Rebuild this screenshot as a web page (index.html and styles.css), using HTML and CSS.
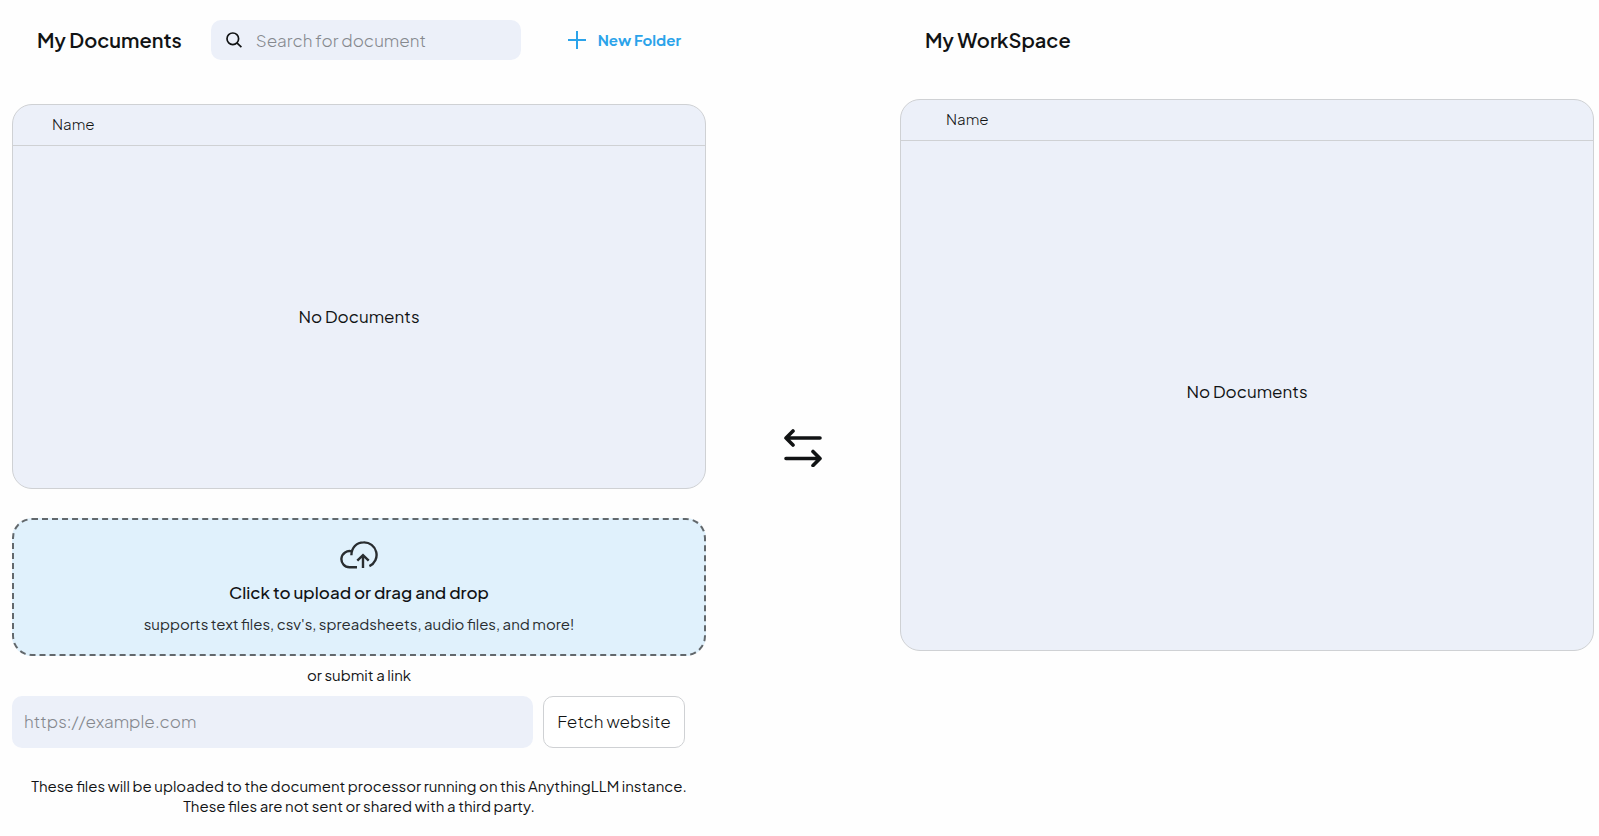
FILE: index.html
```html
<!DOCTYPE html>
<html lang="en">
<head>
<meta charset="utf-8">
<meta name="viewport" content="width=device-width, initial-scale=1">
<title>Documents</title>
<link rel="stylesheet" href="styles.css">
</head>
<body>
<main class="manager">
  <section class="column">
    <header class="column-header">
      <h2 class="title">My Documents</h2>
      <label class="search">
        <svg class="search-icon" viewBox="0 0 16 16" aria-hidden="true"><circle cx="6.8" cy="6.8" r="5.8"/><path d="M10.9 10.900 15.400 15.200"/></svg>
        <input class="search-input" type="search" placeholder="Search for document" aria-label="Search for document">
      </label>
      <button class="new-folder" type="button">
        <svg class="plus-icon" viewBox="0 0 18 18" aria-hidden="true"><path d="M9 0v18M0 9h18"/></svg>
        <span class="new-folder-label">New Folder</span>
      </button>
    </header>
    <table class="files">
      <thead><tr><th scope="col">Name</th></tr></thead>
      <tbody><tr><td>No Documents</td></tr></tbody>
    </table>
    <button class="dropzone" type="button">
      <svg class="cloud-icon" viewBox="0 0 38 28" aria-hidden="true"><path d="M17 26.300H9.500A8.100 8.100 0 1 1 11.700 10.400M11.400 14.300C11.400 6.800 16.500 1.400 23.600 1.400A12.500 12.500 0 0 1 29.400 25.200M23 27V14.300M17.300 19.600 23 14.100 28.700 19.600"/></svg>
      <span class="dropzone-title">Click to upload or drag and drop</span>
      <span class="dropzone-hint">supports text files, csv's, spreadsheets, audio files, and more!</span>
    </button>
    <p class="link-caption">or submit a link</p>
    <form class="link-form">
      <input class="link-input" type="url" placeholder="https://example.com" aria-label="Website link">
      <button class="fetch" type="button">Fetch website</button>
    </form>
    <p class="note">These files will be uploaded to the document processor running on this AnythingLLM instance.<br>These files are not sent or shared with a third party.</p>
  </section>
  <div class="transfer">
    <svg class="transfer-icon" viewBox="0 0 38 38" aria-hidden="true"><path d="M36 9H2M9 2 2 9l7 7M2 29.500h34M29 22.500l7 7-7 7"/></svg>
  </div>
  <section class="column">
    <header class="column-header">
      <h2 class="title">My WorkSpace</h2>
    </header>
    <table class="files files-workspace">
      <thead><tr><th scope="col">Name</th></tr></thead>
      <tbody><tr><td>No Documents</td></tr></tbody>
    </table>
  </section>
</main>
</body>
</html>
```
FILE: styles.css
```css
* {
  box-sizing: border-box;
}

body {
  margin: 0;
  background: #fefefe;
  color: #111314;
  font-family: "Plus Jakarta Sans", Inter, "Liberation Sans", sans-serif;
}

button,
input {
  font: inherit;
  color: inherit;
}

button {
  cursor: pointer;
}

h2,
p {
  margin: 0;
}

.manager {
  display: grid;
  grid-template-columns: 1fr 194px 1fr;
  padding: 20px 5px 20px 12px;
}

.column {
  display: flex;
  flex-direction: column;
  min-width: 0;
}

.column-header {
  display: flex;
  align-items: center;
  height: 40px;
  padding: 0 25px;
}

.title {
  font-size: 20px;
  line-height: 28px;
  font-weight: 600;
  white-space: nowrap;
}

.search {
  display: flex;
  align-items: center;
  gap: 14px;
  width: 310px;
  height: 40px;
  margin-left: auto;
  padding: 0 15px;
  border-radius: 10px;
  background: #ecf0f9;
}

.search-icon {
  flex: none;
  width: 16px;
  height: 16px;
  fill: none;
  stroke: #111314;
  stroke-width: 1.7;
}

.search-input {
  flex: 1;
  min-width: 0;
  padding: 0;
  border: 0;
  background: none;
  font-size: 17px;
  font-weight: 300;
}

input::placeholder {
  color: #85888e;
  opacity: 1;
}

.new-folder {
  display: flex;
  align-items: center;
  gap: 12px;
  margin-left: 47px;
  padding: 0;
  border: 0;
  background: none;
  color: #2ba3ea;
  font-size: 15px;
  font-weight: 700;
  white-space: nowrap;
}

.new-folder-label {
  padding-bottom: 2px;
}

.plus-icon {
  width: 18px;
  height: 18px;
  stroke: #2ba3ea;
  stroke-width: 2;
}

.files {
  width: 100%;
  height: 385px;
  margin-top: 44px;
  border: 1px solid #cfd1d4;
  border-radius: 20px;
  border-spacing: 0;
  background: #ecf0f9;
}

.files-workspace {
  height: 552px;
  margin-top: 39px;
}

.files th {
  height: 41px;
  padding: 0 39px 4px;
  border-bottom: 1px solid #cfd1d4;
  font-size: 15px;
  font-weight: 300;
  text-align: left;
}

.files-workspace th {
  padding-left: 45px;
}

.files td {
  padding: 0 0 2px;
  font-size: 17px;
  text-align: center;
}

.files-workspace td {
  padding-bottom: 9px;
}

.dropzone {
  display: flex;
  flex-direction: column;
  align-items: center;
  height: 138px;
  margin-top: 29px;
  padding: 21px 20px 0;
  border: 2px dashed #62686c;
  border-radius: 20px;
  background: #e0f1fc;
}

.cloud-icon {
  width: 38px;
  height: 28px;
  fill: none;
  stroke: #292d30;
  stroke-width: 2.4;
}

.dropzone-title {
  margin-top: 9px;
  font-size: 17px;
  line-height: 28px;
  font-weight: 500;
}

.dropzone-hint {
  margin-top: 8px;
  color: #292d30;
  font-size: 15px;
  line-height: 20px;
}

.link-caption {
  margin-top: 9px;
  font-size: 15px;
  line-height: 20px;
  text-align: center;
}

.link-form {
  display: flex;
  gap: 10px;
  margin-top: 11px;
  padding-right: 21px;
}

.link-input {
  flex: 1;
  min-width: 0;
  height: 52px;
  padding: 0 12px 2px;
  border: 0;
  border-radius: 10px;
  background: #ecf0f9;
  font-size: 17px;
  font-weight: 300;
}

.fetch {
  width: 142px;
  padding: 0 0 2px;
  border: 1px solid #cfd1d4;
  border-radius: 10px;
  background: #fff;
  font-size: 17px;
  font-weight: 300;
  white-space: nowrap;
}

.note {
  margin-top: 28px;
  font-size: 15px;
  line-height: 20px;
  text-align: center;
}

.transfer {
  display: flex;
  justify-content: center;
  padding-top: 409px;
}

.transfer-icon {
  width: 38px;
  height: 38px;
  fill: none;
  stroke: #111314;
  stroke-width: 3.6;
  stroke-linecap: round;
  stroke-linejoin: round;
}
```
